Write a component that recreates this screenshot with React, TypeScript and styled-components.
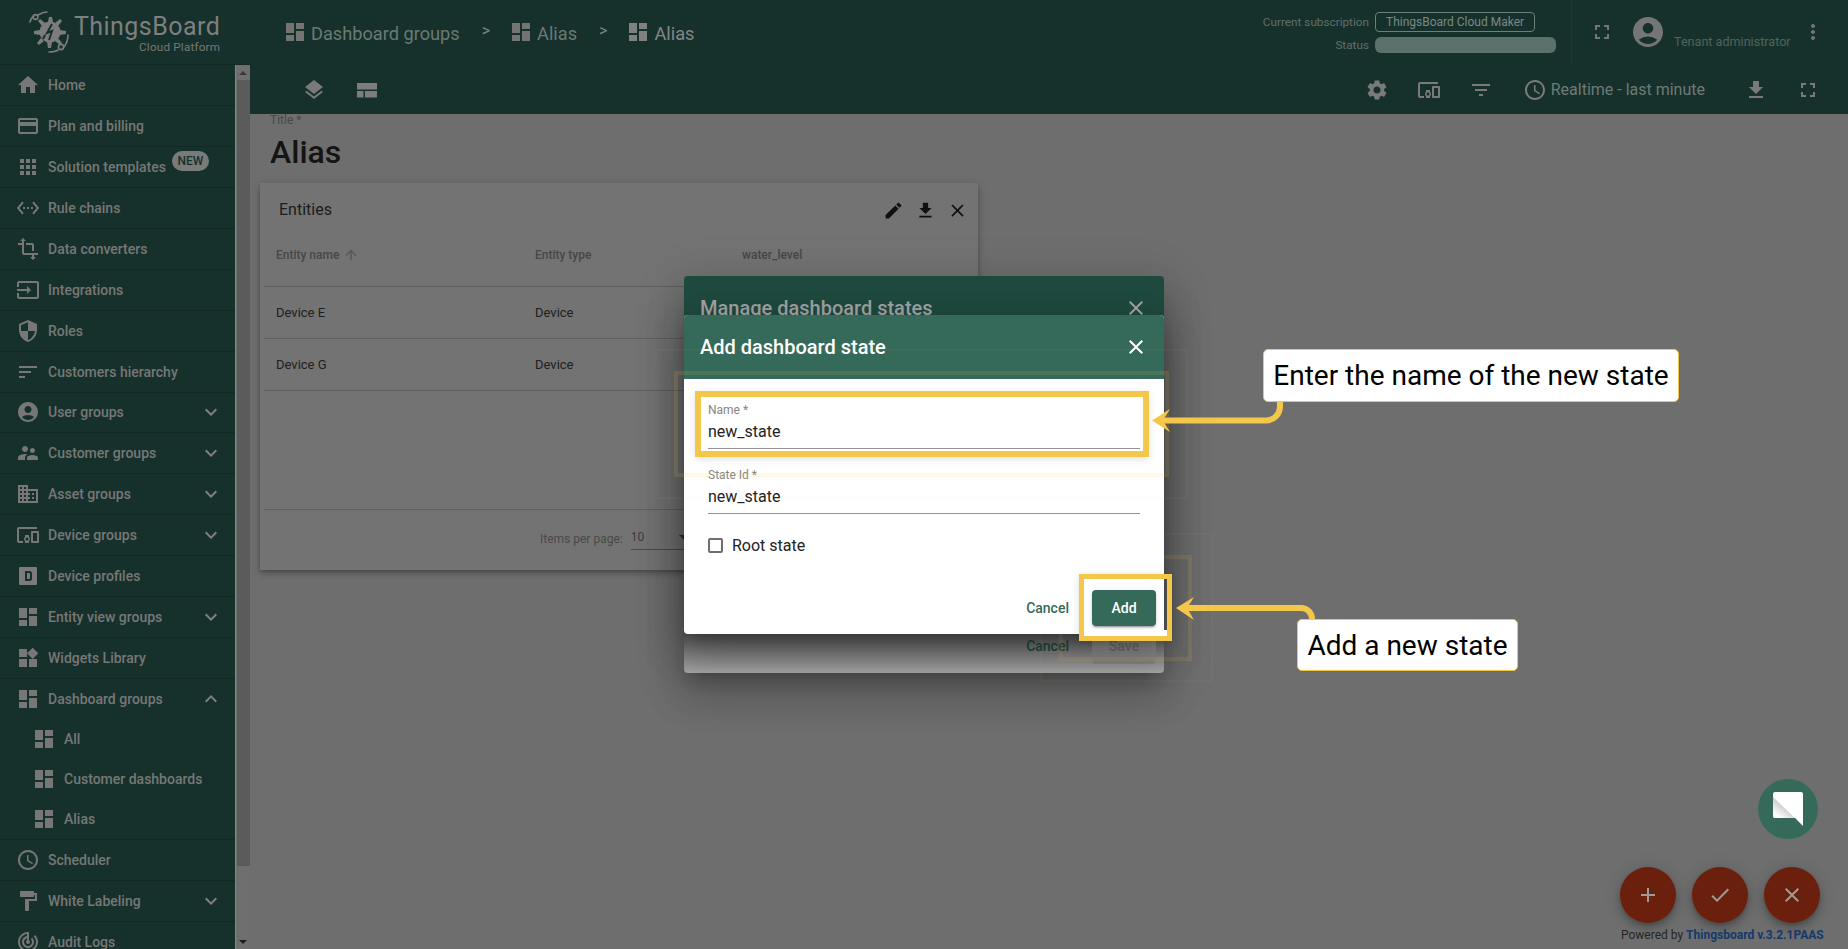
import React from "react";
import styled, { createGlobalStyle } from "styled-components";
import {
  MdHome, MdCreditCard, MdApps, MdSettingsEthernet, MdTransform, MdInput, MdSecurity, MdSort,
  MdAccountCircle, MdSupervisorAccount, MdDomain, MdDevicesOther, MdDashboard, MdWidgets,
  MdSchedule, MdFormatPaint, MdTrackChanges, MdExpandMore, MdExpandLess, MdFullscreen, MdMoreVert,
  MdLayers, MdSettings, MdFilterList, MdFileDownload, MdEdit, MdClose, MdAdd, MdCheck, MdArrowUpward,
} from "react-icons/md";

const Global = createGlobalStyle`
  html, body { margin: 0; padding: 0; height: 100%; overflow: hidden; background: #6e6e6e; }
  body { font-family: Roboto, "Liberation Sans", sans-serif; }
  * { box-sizing: border-box; }
`;

const Page = styled.div`
  position: relative;
  display: grid;
  grid-template-columns: 250px 1fr;
  width: 1848px;
  height: 949px;
  overflow: hidden;
  background: #6e6e6e;
`;

/* ---------- sidebar ---------- */
const Side = styled.aside`
  display: flex;
  flex-direction: column;
  height: 949px;
  background: #16312b;
  overflow: hidden;
`;
const LogoBar = styled.div`
  flex: 0 0 65px;
  display: flex;
  align-items: center;
  padding-left: 29px;
  gap: 3px;
  border-bottom: 1px solid #122923;
  color: #7f7f7f;
`;
const LogoText = styled.div`
  display: flex;
  flex-direction: column;
  align-items: flex-end;
  margin-top: 1px;
`;
const LogoName = styled.div`
  font-size: 25px;
  line-height: 28px;
  font-weight: 400;
  letter-spacing: 0.45px;
  color: #7f7f7f;
`;
const LogoSub = styled.div`
  font-size: 11.7px;
  line-height: 12px;
  color: #787878;
  letter-spacing: 0.2px;
`;
const SideBody = styled.div`
  flex: 1;
  display: flex;
  min-height: 0;
`;
const Nav = styled.nav`
  flex: 0 0 235px;
  display: flex;
  flex-direction: column;
  overflow: hidden;
`;
const Row = styled.div<{ $bare?: boolean }>`
  flex: 0 0 ${(p) => (p.$bare ? "40px" : "40.95px")};
  display: flex;
  align-items: center;
  padding: 0 12px 0 16px;
  color: #777;
  font-size: 14px;
  font-weight: 500;
  border-bottom: ${(p) => (p.$bare ? "0" : "1px solid #122923")};
  svg { flex: none; }
`;
const SubRow = styled(Row)<{ $last?: boolean }>`
  flex: 0 0 ${(p) => (p.$last ? "41px" : "40px")};
  padding-left: 32px;
  border-bottom: ${(p) => (p.$last ? "1px solid #122923" : "0")};
`;
const RowLabel = styled.span`
  margin-left: 8px;
  white-space: nowrap;
`;
const NewBadge = styled.span`
  display: inline-flex;
  align-items: center;
  justify-content: center;
  width: 37px;
  height: 20px;
  margin: -12px 0 0 6px;
  border-radius: 10px;
  background: #7a7a7a;
  color: #16312b;
  font-size: 12px;
  font-weight: 500;
`;
const Chevron = styled.span`
  margin-left: auto;
  display: flex;
  color: #808080;
`;
const Scroll = styled.div`
  flex: 0 0 15px;
  display: flex;
  flex-direction: column;
  align-items: center;
  background: #6f6f6f;
  border-left: 1px solid #858585;
`;
const ScrollArrow = styled.div<{ $down?: boolean }>`
  flex: 0 0 15px;
  display: flex;
  align-items: center;
  justify-content: center;
  &::before {
    content: "";
    border-left: 4px solid transparent;
    border-right: 4px solid transparent;
    ${(p) => (p.$down ? "border-top: 4px solid #1c1c1c;" : "border-bottom: 4px solid #3a3a3a;")}
  }
`;
const ScrollThumb = styled.div`
  width: 13px;
  height: 786px;
  background: #5b5b5b;
`;
const ScrollGap = styled.div`
  flex: 1;
`;

/* ---------- main ---------- */
const Main = styled.main`
  display: flex;
  flex-direction: column;
  min-width: 0;
`;
const TopBar = styled.header`
  flex: 0 0 64px;
  display: flex;
  align-items: center;
  background: #16312b;
  padding-left: 33px;
  color: #6f7c78;
`;
const Crumb = styled.div<{ $last?: boolean }>`
  display: flex;
  align-items: center;
  gap: 4px;
  font-size: 18.2px;
  color: ${(p) => (p.$last ? "#858585" : "#6b7975")};
  svg { color: ${(p) => (p.$last ? "#808080" : "#747474")}; margin-top: -1px; }
  span { margin-top: 2px; }
`;
const CrumbSep = styled.span`
  margin: -4px 19px 0 22px;
  font-size: 16px;
  color: #7b8784;
`;
const SubInfo = styled.div`
  margin-left: auto;
  display: grid;
  grid-template-columns: auto 181px;
  grid-template-rows: 20px 16px;
  align-items: center;
  column-gap: 6px;
  row-gap: 5px;
  margin-top: 1px;
  font-size: 12px;
  color: #5f706b;
`;
const InfoKey = styled.span`
  justify-self: end;
  font-size: 11.75px;
  white-space: nowrap;
`;
const PlanBadge = styled.span`
  justify-self: start;
  display: flex;
  align-items: center;
  height: 20px;
  width: 160px;
  padding: 0 10px;
  border: 1px solid #6c7f79;
  border-radius: 4px;
  color: #7a8986;
  white-space: nowrap;
`;
const StatusBar = styled.span`
  height: 16px;
  border-radius: 6px;
  background: #5c706b;
`;
const TopRight = styled.div`
  margin-left: 15px;
  height: 64px;
  width: 277px;
  border-left: 1px solid #1c3a33;
  display: flex;
  align-items: center;
  padding-left: 18px;
  color: #757575;
`;
const IconGap = styled.span`
  width: 16px;
`;
const UserName = styled.span`
  align-self: flex-end;
  margin: 0 10px 15px 8px;
  font-size: 12.6px;
  color: #51635e;
  white-space: nowrap;
`;
const ToolBar = styled.div`
  flex: 0 0 50px;
  display: flex;
  align-items: center;
  background: #16312b;
  color: #7a7a7a;
  padding-top: 1px;
`;
const ToolLeft = styled.div`
  display: flex;
  align-items: center;
  gap: 29px;
  padding-left: 52px;
`;
const ToolRight = styled.div`
  margin-left: auto;
  display: flex;
  align-items: center;
  padding-right: 28px;
`;
const ToolSlot = styled.span<{ $w?: number }>`
  display: flex;
  align-items: center;
  margin-right: ${(p) => p.$w ?? 28}px;
`;
const Realtime = styled.span`
  margin: -1px 0 0 4px;
  font-size: 16px;
  color: #6e7a77;
  white-space: nowrap;
`;
const Content = styled.div`
  flex: 1;
  position: relative;
  padding: 0 0 0 10px;
`;
const TitleBox = styled.div`
  padding-left: 10px;
  height: 58px;
`;
const TitleLabel = styled.div`
  margin-top: -1px;
  font-size: 12px;
  line-height: 14px;
  color: #494949;
`;
const TitleValue = styled.div`
  margin-top: 5px;
  font-size: 32px;
  line-height: 40px;
  font-weight: 500;
  color: #141414;
`;
const Card = styled.section`
  margin-top: 12px;
  width: 718px;
  height: 387px;
  background: #737373;
  box-shadow: 0 2px 4px -1px rgba(0,0,0,.2), 0 4px 5px rgba(0,0,0,.14), 0 1px 10px rgba(0,0,0,.12);
  display: flex;
  flex-direction: column;
`;
const CardHead = styled.div`
  flex: 0 0 47px;
  display: flex;
  align-items: center;
  padding: 5px 10px 0 19px;
  font-size: 16px;
  color: #1c1c1c;
`;
const CardTools = styled.div`
  margin-left: auto;
  display: flex;
  gap: 11px;
  margin-top: 2px;
  color: #101010;
`;
const Table = styled.div`
  margin: 0 4px;
  flex: 1;
  display: flex;
  flex-direction: column;
`;
const TRow = styled.div<{ $head?: boolean }>`
  flex: 0 0 ${(p) => (p.$head ? "57px" : "52px")};
  display: grid;
  grid-template-columns: 259px 207px 1fr;
  align-items: center;
  padding: ${(p) => (p.$head ? "0 0 7px 12px" : "0 0 0 12px")};
  border-bottom: 1px solid #5f5f5f;
  font-size: ${(p) => (p.$head ? "12px" : "13px")};
  font-weight: ${(p) => (p.$head ? 500 : 400)};
  color: ${(p) => (p.$head ? "#474747" : "#202020")};
`;
const HeadCell = styled.span`
  display: flex;
  align-items: center;
  gap: 4px;
  svg { color: #555; }
`;
const TBlank = styled.div`
  flex: 0 0 119px;
  border-bottom: 1px solid #5f5f5f;
`;
const Pager = styled.div`
  flex: 1;
  display: flex;
  align-items: center;
  padding: 0 0 2px 276px;
  font-size: 12px;
  color: #494949;
`;
const PagerSelect = styled.div`
  margin-left: 8px;
  width: 60px;
  height: 22px;
  display: flex;
  align-items: center;
  border-bottom: 1px solid #4a4a4a;
  font-size: 12px;
  color: #3c3c3c;
  padding-bottom: 3px;
  &::after {
    content: "";
    margin-left: auto;
    margin-right: 2px;
    border-left: 5px solid transparent;
    border-right: 5px solid transparent;
    border-top: 5px solid #333;
  }
`;

/* ---------- dialogs ---------- */
const DialogShadow = `0 11px 15px -7px rgba(0,0,0,.2), 0 24px 38px 3px rgba(0,0,0,.14), 0 9px 46px 8px rgba(0,0,0,.12)`;
const BackDialog = styled.div`
  position: absolute;
  left: 684px;
  top: 276px;
  width: 480px;
  height: 397px;
  border-radius: 4px;
  overflow: hidden;
  background: linear-gradient(#555 90%, #a6a6a6 100%);
  box-shadow: ${DialogShadow};
  display: flex;
  flex-direction: column;
`;
const BackHead = styled.div`
  flex: 0 0 64px;
  display: flex;
  align-items: center;
  justify-content: space-between;
  padding: 0 16px;
  background: #1f4a3f;
  color: #a3a3a3;
  font-size: 20px;
  font-weight: 500;
`;
const BackActions = styled.div`
  margin-top: auto;
  display: flex;
  justify-content: flex-end;
  align-items: center;
  gap: 7px;
  padding: 0 8px 9px 0;
`;
const FrontDialog = styled.div`
  position: absolute;
  left: 684px;
  top: 315px;
  width: 480px;
  height: 319px;
  border-radius: 4px;
  overflow: hidden;
  background: #fff;
  box-shadow: ${DialogShadow};
  display: flex;
  flex-direction: column;
`;
const FrontHead = styled.div`
  flex: 0 0 64px;
  display: flex;
  align-items: center;
  justify-content: space-between;
  padding: 0 16px;
  background: #356a5b;
  color: #fff;
  font-size: 20px;
  font-weight: 500;
`;
const FormBody = styled.div`
  flex: 1;
  display: flex;
  flex-direction: column;
  gap: 19px;
  padding: 24px 24px 0;
`;
const Field = styled.div`
  display: flex;
  flex-direction: column;
  height: 46px;
  border-bottom: 1px solid #949494;
`;
const FieldLabel = styled.div`
  font-size: 12px;
  line-height: 14px;
  color: #858585;
`;
const FieldValue = styled.div`
  margin-top: 4px;
  font-size: 16px;
  line-height: 22px;
  color: #222;
`;
const CheckRow = styled.div`
  height: 24px;
  display: flex;
  align-items: center;
  gap: 9px;
  font-size: 16px;
  color: #222;
`;
const CheckBox = styled.span`
  width: 15px;
  height: 15px;
  border: 2px solid #6e6e6e;
  border-radius: 2px;
`;
const Actions = styled.div`
  display: flex;
  justify-content: flex-end;
  align-items: center;
  gap: 7px;
  padding: 0 8px 8px 0;
`;
const TextBtn = styled.span<{ $dark?: boolean }>`
  display: flex;
  align-items: center;
  justify-content: center;
  height: 36px;
  padding: 0 16px;
  font-size: 14px;
  font-weight: 500;
  color: ${(p) => (p.$dark ? "#1b463b" : "#356a5b")};
`;
const FillBtn = styled.span<{ $off?: boolean }>`
  display: flex;
  align-items: center;
  justify-content: center;
  width: 64px;
  height: 36px;
  border-radius: 4px;
  font-size: 14px;
  font-weight: 500;
  color: ${(p) => (p.$off ? "#686868" : "#fff")};
  background: ${(p) => (p.$off ? "#848484" : "#356a5b")};
  box-shadow: ${(p) => (p.$off ? "none" : "0 3px 1px -2px rgba(0,0,0,.2), 0 2px 2px rgba(0,0,0,.14), 0 1px 5px rgba(0,0,0,.12)")};
`;

/* ---------- tutorial annotations ---------- */
const Frame = styled.div<{ $x: number; $y: number; $w: number; $h: number; $b: number; $a: number; $lift?: boolean }>`
  position: absolute;
  left: ${(p) => p.$x}px;
  top: ${(p) => p.$y}px;
  width: ${(p) => p.$w}px;
  height: ${(p) => p.$h}px;
  border: ${(p) => p.$b}px solid rgba(244, 198, 74, ${(p) => p.$a});
  ${(p) => (p.$lift ? "box-shadow: 0 2px 8px rgba(0,0,0,.12);" : "")}
`;
const AddMask = styled.div`
  position: absolute;
  left: 1084px;
  top: 630px;
  width: 83px;
  height: 6px;
  background: #fff;
`;
const Callout = styled.div<{ $x: number; $y: number; $w: number; $h: number }>`
  position: absolute;
  left: ${(p) => p.$x}px;
  top: ${(p) => p.$y}px;
  width: ${(p) => p.$w}px;
  height: ${(p) => p.$h}px;
  display: flex;
  align-items: center;
  justify-content: center;
  background: #fff;
  border: 1px solid #f4c64a;
  border-radius: 5px;
  color: #000;
  font-size: 28px;
  white-space: nowrap;
`;
const ArrowSvg = styled.svg`
  position: absolute;
  left: 0;
  top: 0;
  width: 1848px;
  height: 949px;
  pointer-events: none;
`;

/* ---------- floating buttons ---------- */
const FabRow = styled.div`
  position: absolute;
  right: 28px;
  top: 867px;
  display: flex;
  gap: 16px;
`;
const Fab = styled.div`
  width: 56px;
  height: 56px;
  border-radius: 50%;
  background: #6b200e;
  color: #a09a98;
  display: flex;
  align-items: center;
  justify-content: center;
  box-shadow: 0 3px 5px -1px rgba(0,0,0,.2), 0 6px 10px rgba(0,0,0,.14), 0 1px 18px rgba(0,0,0,.12);
`;
const ChatFab = styled.div`
  position: absolute;
  left: 1758px;
  top: 779px;
  width: 60px;
  height: 60px;
  border-radius: 50%;
  background: #356a5b;
  display: flex;
  align-items: center;
  justify-content: center;
`;
const Powered = styled.div`
  position: absolute;
  left: 1621px;
  top: 928px;
  font-size: 12px;
  line-height: 14px;
  color: #242424;
  white-space: nowrap;
`;
const PoweredLink = styled.span`
  color: #13396b;
  font-weight: 700;
`;

/* ---------- drawings ---------- */
const Logo = () => (
  <svg width="42" height="42" viewBox="0 0 42 42" fill="none">
    <g stroke="#7c7c7c" strokeWidth="1.6" fill="none" strokeLinecap="round">
      <path d="M1 11 C2 7 3 6 5 5" />
      <circle cx="5" cy="5" r="2.4" transform="translate(1.5 1)" />
      <path d="M9 4 C12 2 15 1 18 1" />
      <path d="M39 24 C39 29 38 32 35 36" />
      <circle cx="32" cy="36" r="2.6" />
      <path d="M29 39 C26 41 23 41 20 41" />
    </g>
    <g fill="#7c7c7c">
      <circle cx="21" cy="21" r="10.5" />
      <path d="M20 6h3l1 5h-5zM31 8l2 2-4 5-3-3zM37 20v3l-6 1v-5zM33 32l-2 2-5-4 3-3zM22 37h-3l-1-6h5zM10 34l-2-2 4-5 3 3zM5 23v-3l6-1v5zM9 10l2-2 5 4-3 3z" />
    </g>
    <path d="M23 13 L18 22 L23 20 L20 29 M16 24 L14 28" stroke="#16312b" strokeWidth="2" fill="none" />
  </svg>
);
const DeviceProfile = () => (
  <svg width="24" height="24" viewBox="0 0 24 24">
    <path fillRule="evenodd" fill="#7c7c7c" d="M4 3h16a1 1 0 0 1 1 1v16a1 1 0 0 1-1 1H4a1 1 0 0 1-1-1V4a1 1 0 0 1 1-1zM9 7v10h4.500a2.500 2.500 0 0 0 2.500-2.500v-5A2.500 2.500 0 0 0 13.500 7zM11 9h2.200a.8.8 0 0 1 .8.8v4.400a.8.8 0 0 1-.8.8H11z" />
  </svg>
);
const CompactIcon = () => (
  <svg width="24" height="24" viewBox="0 0 24 24" fill="#7d7d7d">
    <rect x="2" y="5" width="20" height="6.500" />
    <rect x="2" y="13" width="6.500" height="6.500" />
    <rect x="10" y="13" width="12" height="6.500" />
  </svg>
);
const ChatIcon = () => (
  <svg width="32" height="36" viewBox="0 0 32 36">
    <defs>
      <linearGradient id="chatShade" x1="0.6" y1="0.35" x2="0.2" y2="0.85">
        <stop offset="0" stopColor="#c2c2c2" />
        <stop offset="1" stopColor="#fbfbfb" />
      </linearGradient>
    </defs>
    <path d="M3 1h26a2 2 0 0 1 2 2v32l-8-8H3a2 2 0 0 1-2-2V3a2 2 0 0 1 2-2z" fill="#fff" />
    <path d="M1 6 L23 27 H3 a2 2 0 0 1-2-2z" fill="url(#chatShade)" />
  </svg>
);

type Item = { icon: React.ReactNode; label: string; more?: boolean; badge?: boolean };
const items: Item[] = [
  { icon: <MdHome size={24} />, label: "Home" },
  { icon: <MdCreditCard size={24} />, label: "Plan and billing" },
  { icon: <MdApps size={24} />, label: "Solution templates", badge: true },
  { icon: <MdSettingsEthernet size={24} />, label: "Rule chains" },
  { icon: <MdTransform size={24} />, label: "Data converters" },
  { icon: <MdInput size={24} />, label: "Integrations" },
  { icon: <MdSecurity size={24} />, label: "Roles" },
  { icon: <MdSort size={24} />, label: "Customers hierarchy" },
  { icon: <MdAccountCircle size={24} />, label: "User groups", more: true },
  { icon: <MdSupervisorAccount size={24} />, label: "Customer groups", more: true },
  { icon: <MdDomain size={24} />, label: "Asset groups", more: true },
  { icon: <MdDevicesOther size={24} />, label: "Device groups", more: true },
  { icon: <DeviceProfile />, label: "Device profiles" },
  { icon: <MdDashboard size={24} />, label: "Entity view groups", more: true },
  { icon: <MdWidgets size={24} />, label: "Widgets Library" },
];
const tail: Item[] = [
  { icon: <MdSchedule size={24} />, label: "Scheduler" },
  { icon: <MdFormatPaint size={24} />, label: "White Labeling", more: true },
  { icon: <MdTrackChanges size={24} />, label: "Audit Logs" },
];

const NavRow = ({ item }: { item: Item }) => (
  <Row>
    {item.icon}
    <RowLabel>{item.label}</RowLabel>
    {item.badge && <NewBadge>NEW</NewBadge>}
    {item.more && (
      <Chevron>
        <MdExpandMore size={24} />
      </Chevron>
    )}
  </Row>
);

export default function App() {
  return (
    <Page>
      <Global />
      <Side>
        <LogoBar>
          <Logo />
          <LogoText>
            <LogoName>ThingsBoard</LogoName>
            <LogoSub>Cloud Platform</LogoSub>
          </LogoText>
        </LogoBar>
        <SideBody>
          <Nav>
            {items.map((it) => (
              <NavRow key={it.label} item={it} />
            ))}
            <Row $bare>
              <MdDashboard size={24} />
              <RowLabel>Dashboard groups</RowLabel>
              <Chevron>
                <MdExpandLess size={24} />
              </Chevron>
            </Row>
            <SubRow $bare>
              <MdDashboard size={24} />
              <RowLabel>All</RowLabel>
            </SubRow>
            <SubRow $bare>
              <MdDashboard size={24} />
              <RowLabel>Customer dashboards</RowLabel>
            </SubRow>
            <SubRow $last>
              <MdDashboard size={24} />
              <RowLabel>Alias</RowLabel>
            </SubRow>
            {tail.map((it) => (
              <NavRow key={it.label} item={it} />
            ))}
          </Nav>
          <Scroll>
            <ScrollArrow />
            <ScrollThumb />
            <ScrollGap />
            <ScrollArrow $down />
          </Scroll>
        </SideBody>
      </Side>

      <Main>
        <TopBar>
          <Crumb>
            <MdDashboard size={24} />
            <span>Dashboard groups</span>
          </Crumb>
          <CrumbSep>&gt;</CrumbSep>
          <Crumb>
            <MdDashboard size={24} />
            <span>Alias</span>
          </Crumb>
          <CrumbSep>&gt;</CrumbSep>
          <Crumb $last>
            <MdDashboard size={24} />
            <span>Alias</span>
          </Crumb>
          <SubInfo>
            <InfoKey>Current subscription</InfoKey>
            <PlanBadge>ThingsBoard Cloud Maker</PlanBadge>
            <InfoKey>Status</InfoKey>
            <StatusBar />
          </SubInfo>
          <TopRight>
            <MdFullscreen size={24} />
            <IconGap />
            <MdAccountCircle size={36} />
            <UserName>Tenant administrator</UserName>
            <MdMoreVert size={24} />
          </TopRight>
        </TopBar>
        <ToolBar>
          <ToolLeft>
            <MdLayers size={24} />
            <CompactIcon />
          </ToolLeft>
          <ToolRight>
            <ToolSlot>
              <MdSettings size={24} />
            </ToolSlot>
            <ToolSlot>
              <MdDevicesOther size={24} />
            </ToolSlot>
            <ToolSlot $w={30}>
              <MdFilterList size={24} />
            </ToolSlot>
            <ToolSlot $w={39}>
              <MdSchedule size={24} />
              <Realtime>Realtime - last minute</Realtime>
            </ToolSlot>
            <ToolSlot>
              <MdFileDownload size={24} />
            </ToolSlot>
            <ToolSlot $w={0}>
              <MdFullscreen size={24} />
            </ToolSlot>
          </ToolRight>
        </ToolBar>
        <Content>
          <TitleBox>
            <TitleLabel>Title *</TitleLabel>
            <TitleValue>Alias</TitleValue>
          </TitleBox>
          <Card>
            <CardHead>
              Entities
              <CardTools>
                <MdEdit size={21} />
                <MdFileDownload size={21} />
                <MdClose size={21} />
              </CardTools>
            </CardHead>
            <Table>
              <TRow $head>
                <HeadCell>
                  Entity name <MdArrowUpward size={16} />
                </HeadCell>
                <span>Entity type</span>
                <span>water_level</span>
              </TRow>
              <TRow>
                <span>Device E</span>
                <span>Device</span>
              </TRow>
              <TRow>
                <span>Device G</span>
                <span>Device</span>
              </TRow>
              <TBlank />
              <Pager>
                Items per page:
                <PagerSelect>10</PagerSelect>
              </Pager>
            </Table>
          </Card>
        </Content>
      </Main>

      <BackDialog>
        <BackHead>
          Manage dashboard states
          <MdClose size={24} />
        </BackHead>
        <BackActions>
          <TextBtn $dark>Cancel</TextBtn>
          <FillBtn $off>Save</FillBtn>
        </BackActions>
      </BackDialog>

      <Frame $x={1040} $y={533} $w={173} $h={149} $b={2} $a={0.04} />
      <Frame $x={1059} $y={555} $w={133} $h={106} $b={4} $a={0.12} />

      <FrontDialog>
        <FrontHead>
          Add dashboard state
          <MdClose size={24} />
        </FrontHead>
        <FormBody>
          <Field>
            <FieldLabel>Name *</FieldLabel>
            <FieldValue>new_state</FieldValue>
          </Field>
          <Field>
            <FieldLabel>State Id *</FieldLabel>
            <FieldValue>new_state</FieldValue>
          </Field>
          <CheckRow>
            <CheckBox />
            Root state
          </CheckRow>
        </FormBody>
        <Actions>
          <TextBtn>Cancel</TextBtn>
          <FillBtn>Add</FillBtn>
        </Actions>
      </FrontDialog>

      <Frame $x={655} $y={349} $w={533} $h={150} $b={2} $a={0.04} />
      <Frame $x={674} $y={371} $w={495} $h={106} $b={4} $a={0.12} />
      <Frame $x={695} $y={391} $w={454} $h={66} $b={6} $a={1} $lift />
      <AddMask />
      <Frame $x={1079} $y={574} $w={93} $h={67} $b={5} $a={1} $lift />

      <Callout $x={1263} $y={349} $w={416} $h={53}>
        Enter the name of the new state
      </Callout>
      <Callout $x={1297} $y={619} $w={221} $h={52}>
        Add a new state
      </Callout>
      <ArrowSvg viewBox="0 0 1848 949">
        <g fill="none" stroke="#f4c64a" strokeWidth="6">
          <path d="M1280 402 v4 a14 14 0 0 1 -14 14.500 H1160" />
          <path d="M1312 619 v0 a11 11 0 0 0 -11 -11 H1184" />
        </g>
        <g fill="#f4c64a">
          <path d="M1152 420.500 L1170 409 L1163 420.500 L1170 432 Z" />
          <path d="M1176 608 L1194 597 L1187 608 L1194 620 Z" />
        </g>
      </ArrowSvg>

      <ChatFab>
        <ChatIcon />
      </ChatFab>
      <FabRow>
        <Fab>
          <MdAdd size={24} />
        </Fab>
        <Fab>
          <MdCheck size={24} />
        </Fab>
        <Fab>
          <MdClose size={24} />
        </Fab>
      </FabRow>
      <Powered>
        Powered by <PoweredLink>Thingsboard v.3.2.1PAAS</PoweredLink>
      </Powered>
    </Page>
  );
}
